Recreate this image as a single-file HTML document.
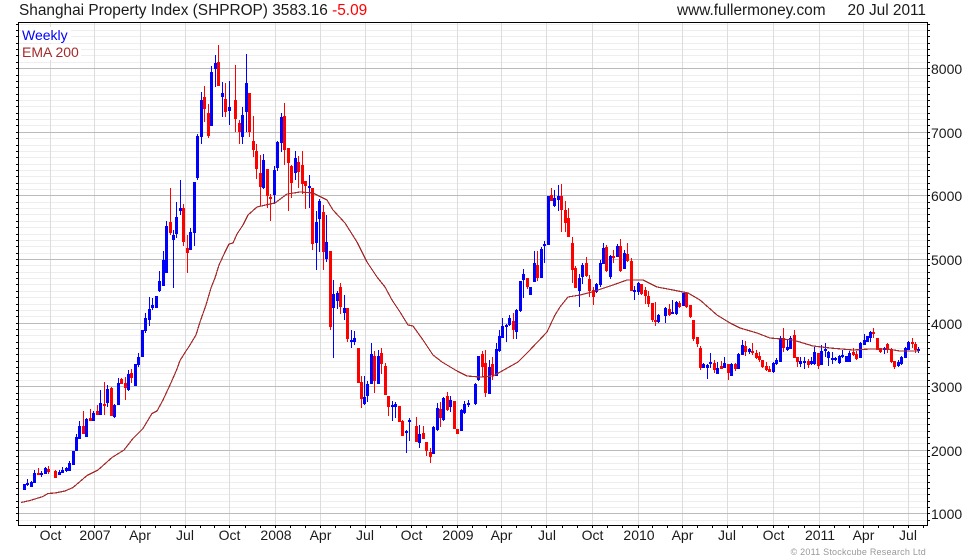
<!DOCTYPE html>
<html><head><meta charset="utf-8"><title>Shanghai Property Index</title>
<style>html,body{margin:0;padding:0;background:#fff;width:980px;height:560px;overflow:hidden}svg{display:block}
text{font-family:"Liberation Sans",Arial,sans-serif;font-size:14px;fill:#1a1a1a}
text.t{font-size:15.4px}
path,polyline{fill:none;shape-rendering:crispEdges}</style></head><body>
<svg width="980" height="560" viewBox="0 0 980 560" xmlns="http://www.w3.org/2000/svg">
<rect width="980" height="560" fill="#fff"/>
<path stroke="#eee" d="M19 24.5H927M19 30.5H927M19 36.5H927M19 43.5H927M19 49.5H927M19 55.5H927M19 62.5H927M19 75.5H927M19 81.5H927M19 87.5H927M19 94.5H927M19 100.5H927M19 106.5H927M19 113.5H927M19 119.5H927M19 125.5H927M19 138.5H927M19 145.5H927M19 151.5H927M19 157.5H927M19 164.5H927M19 170.5H927M19 176.5H927M19 183.5H927M19 189.5H927M19 202.5H927M19 208.5H927M19 214.5H927M19 221.5H927M19 227.5H927M19 234.5H927M19 240.5H927M19 246.5H927M19 253.5H927M19 265.5H927M19 272.5H927M19 278.5H927M19 284.5H927M19 291.5H927M19 297.5H927M19 304.5H927M19 310.5H927M19 316.5H927M19 329.5H927M19 335.5H927M19 342.5H927M19 348.5H927M19 354.5H927M19 361.5H927M19 367.5H927M19 373.5H927M19 380.5H927M19 393.5H927M19 399.5H927M19 405.5H927M19 412.5H927M19 418.5H927M19 424.5H927M19 431.5H927M19 437.5H927M19 443.5H927M19 456.5H927M19 463.5H927M19 469.5H927M19 475.5H927M19 482.5H927M19 488.5H927M19 494.5H927M19 501.5H927M19 507.5H927M19 520.5H927"/>
<path stroke="#ddd" d="M50.5 23V525M94.5 23V525M140.5 23V525M185.5 23V525M229.5 23V525M275.5 23V525M320.5 23V525M365.5 23V525M411.5 23V525M457.5 23V525M501.5 23V525M546.5 23V525M592.5 23V525M638.5 23V525M682.5 23V525M727.5 23V525M773.5 23V525M819.5 23V525M863.5 23V525M908.5 23V525"/>
<path stroke="#bbb" d="M19 68.5H927M19 132.5H927M19 195.5H927M19 259.5H927M19 323.5H927M19 386.5H927M19 450.5H927M19 513.5H927"/>
<rect x="21" y="27" width="50" height="16" fill="#fff"/><rect x="21" y="44" width="60" height="16" fill="#fff"/>
<!-- blue wicks -->
<path stroke="#0000ff" d="M27.5 479V486M31.5 481V487M34.5 470V483M41.5 471V477M45.5 467V474M59.5 470V475M62.5 467V473M66.5 467V472M69.5 461V471M76.5 434V451M79.5 421V439M86.5 418V437M93.5 411V421M100.5 390V415M107.5 385V407M114.5 404V418M118.5 378V405M128.5 370V391M138.5 353V367M145.5 313V333M149.5 297V326M152.5 298V310M159.5 271V292M163.5 251V286M166.5 221V273M173.5 230V288M176.5 202V238M180.5 180V215M190.5 228V250M194.5 182V246M197.5 134V180M201.5 92V144M211.5 66V126M215.5 55V87M222.5 82V117M229.5 81V125M242.5 107V144M246.5 54V132M263.5 154V189M274.5 166V204M277.5 141V171M281.5 113V152M295.5 151V180M309.5 175V208M316.5 211V270M319.5 199V252M326.5 215V262M333.5 280V358M337.5 291V309M344.5 295V320M351.5 330V348M354.5 331V345M364.5 376V405M367.5 381V402M371.5 343V384M378.5 350V384M392.5 401V421M395.5 402V418M406.5 430V453M409.5 418V441M419.5 425V448M433.5 426V454M437.5 403V431M443.5 397V421M450.5 396V412M461.5 409V431M464.5 401V414M468.5 400V407M475.5 383V405M478.5 356V381M489.5 360V394M496.5 343V376M499.5 330V352M502.5 318V338M506.5 324V342M509.5 315V326M516.5 309V339M520.5 281V312M523.5 269V298M534.5 251V282M541.5 247V278M544.5 241V263M554.5 190V207M558.5 185V211M579.5 274V307M582.5 263V284M596.5 283V293M600.5 260V287M603.5 243V264M610.5 255V279M617.5 244V257M624.5 250V269M634.5 286V300M638.5 282V295M658.5 314V323M665.5 307V323M672.5 300V314M676.5 301V315M703.5 363V368M707.5 364V379M710.5 353V368M717.5 362V374M724.5 357V368M731.5 363V376M738.5 353V369M742.5 340V355M749.5 348V354M773.5 362V373M776.5 358V365M780.5 336V362M787.5 339V351M790.5 336V349M800.5 357V367M804.5 357V369M811.5 357V365M814.5 347V365M821.5 345V365M825.5 343V357M828.5 351V366M832.5 352V364M835.5 357V361M839.5 355V364M842.5 350V358M849.5 351V362M860.5 342V358M864.5 334V345M870.5 331V342M884.5 347V354M898.5 360V367M901.5 356V365M905.5 347V358M908.5 341V350M918.5 347V353"/>
<!-- blue bodies -->
<path stroke="#0000ff" stroke-width="3" d="M24.5 484V490M27.5 483V485M31.5 482V487M34.5 473V483M41.5 473V475M45.5 468V474M59.5 472V475M62.5 470V473M66.5 468V471M69.5 463V471M73.5 451V465M76.5 437V451M79.5 426V439M86.5 419V437M93.5 413V421M100.5 403V415M107.5 389V403M114.5 405V417M118.5 383V405M128.5 374V390M135.5 364V386M138.5 357V365M142.5 330V357M145.5 318V331M149.5 309V320M152.5 305V308M156.5 296V308M159.5 281V291M163.5 260V286M166.5 226V273M173.5 235V240M176.5 217V234M180.5 208V211M190.5 232V250M194.5 182V233M197.5 136V178M201.5 100V137M211.5 72V126M215.5 63V69M222.5 93V97M229.5 107V111M242.5 115V137M246.5 83V112M263.5 160V188M274.5 170V195M277.5 142V168M281.5 117V143M295.5 158V173M309.5 186V188M316.5 222V243M319.5 201V219M326.5 242V259M333.5 294V308M337.5 293V301M344.5 308V313M351.5 340V342M354.5 338V342M364.5 397V404M367.5 384V396M371.5 354V384M378.5 356V384M392.5 405V407M395.5 404V407M406.5 431V433M409.5 420V422M419.5 434V443M433.5 427V454M437.5 408V430M443.5 398V420M450.5 400V407M461.5 410V431M464.5 404V413M468.5 403V405M475.5 384V404M478.5 356V380M489.5 367V394M496.5 349V376M499.5 336V351M502.5 326V338M506.5 325V327M509.5 318V325M516.5 310V332M520.5 281V311M523.5 274V280M530.5 287V295M534.5 263V282M541.5 249V278M544.5 244V246M548.5 196V245M554.5 198V206M558.5 196V200M579.5 278V291M582.5 265V277M596.5 284V292M600.5 263V285M603.5 248V264M610.5 256V277M617.5 246V257M624.5 253V269M634.5 290V292M638.5 283V292M658.5 315V322M665.5 308V316M672.5 312V314M676.5 302V314M683.5 293V306M703.5 364V368M707.5 365V368M710.5 362V364M717.5 368V374M724.5 363V368M731.5 364V376M738.5 354V369M742.5 345V355M749.5 349V352M773.5 363V372M776.5 360V364M780.5 338V362M787.5 347V350M790.5 338V349M800.5 361V364M804.5 361V363M811.5 361V364M814.5 352V364M821.5 351V365M825.5 349V351M828.5 352V358M832.5 358V360M835.5 358V360M839.5 356V363M842.5 355V357M846.5 356V362M849.5 353V362M860.5 343V358M864.5 340V345M867.5 336V342M870.5 332V338M884.5 348V350M898.5 362V366M901.5 357V364M905.5 348V358M908.5 342V350M918.5 349V351"/>
<!-- red wicks -->
<path stroke="#ff0000" d="M38.5 468V475M48.5 466V474M55.5 470V478M83.5 411V434M90.5 409V421M97.5 405V415M104.5 382V415M111.5 387V416M121.5 378V384M125.5 377V400M131.5 369V383M170.5 188V235M183.5 204V246M187.5 235V273M204.5 86V122M208.5 104V138M218.5 45V86M225.5 83V117M235.5 65V132M239.5 120V144M249.5 93V137M253.5 116V157M256.5 144V179M260.5 155V206M267.5 169V208M270.5 194V221M284.5 103V165M288.5 148V211M291.5 165V198M298.5 156V188M302.5 151V194M305.5 181V209M312.5 188V250M323.5 205V270M330.5 251V330M340.5 283V314M347.5 308V342M361.5 376V408M374.5 351V393M381.5 348V374M385.5 363V395M388.5 396V416M402.5 420V436M416.5 417V442M423.5 426V439M426.5 442V456M430.5 448V463M440.5 402V427M447.5 392V411M482.5 351V377M485.5 350V397M492.5 357V380M513.5 313V339M527.5 278V289M537.5 251V281M551.5 188V201M561.5 184V232M565.5 201V232M568.5 208V237M572.5 237V283M575.5 266V288M586.5 257V277M589.5 275V297M593.5 287V305M606.5 245V272M613.5 250V263M620.5 239V272M627.5 243V262M631.5 258V291M641.5 284V295M645.5 287V304M648.5 291V307M652.5 303V322M655.5 302V326M669.5 304V316M679.5 301V308M686.5 292V308M690.5 305V318M693.5 320V341M697.5 337V347M700.5 346V370M714.5 360V373M721.5 361V369M728.5 364V380M735.5 363V371M745.5 341V356M752.5 343V355M756.5 350V359M759.5 352V362M762.5 360V368M766.5 362V371M769.5 366V372M783.5 328V352M794.5 330V358M797.5 357V367M808.5 359V368M818.5 353V369M853.5 348V356M856.5 351V360M873.5 328V338M880.5 348V353M887.5 343V353M891.5 348V363M894.5 361V369M912.5 338V348M915.5 342V353"/>
<!-- red bodies -->
<path stroke="#ff0000" stroke-width="3" d="M38.5 473V475M48.5 469V472M55.5 471V478M83.5 426V434M90.5 418V421M97.5 411V415M104.5 404V406M111.5 388V416M121.5 379V384M125.5 383V388M131.5 373V378M170.5 222V233M183.5 208V242M187.5 248V253M204.5 97V109M208.5 113V136M218.5 62V86M225.5 99V112M235.5 100V119M239.5 123V132M249.5 93V132M253.5 141V150M256.5 151V169M260.5 173V187M267.5 169V196M270.5 197V199M284.5 116V150M288.5 148V163M291.5 166V183M298.5 162V172M302.5 165V184M305.5 181V186M312.5 188V244M323.5 212V252M330.5 251V327M340.5 287V307M347.5 308V339M358.5 348V383M361.5 382V399M374.5 356V381M381.5 353V364M385.5 366V395M388.5 396V407M399.5 406V422M402.5 421V436M416.5 426V442M423.5 433V439M426.5 442V451M430.5 452V457M440.5 409V418M447.5 396V410M454.5 401V429M457.5 429V434M482.5 354V367M485.5 363V393M492.5 364V375M513.5 321V330M527.5 278V287M537.5 265V278M551.5 195V201M561.5 196V210M565.5 210V223M568.5 218V237M572.5 243V270M575.5 268V288M586.5 263V276M589.5 279V291M593.5 290V297M606.5 247V271M613.5 256V258M620.5 246V271M627.5 254V261M631.5 261V291M641.5 284V294M645.5 290V296M648.5 296V304M652.5 303V320M655.5 320V322M669.5 309V315M679.5 303V307M686.5 293V307M690.5 305V317M693.5 320V339M697.5 337V344M700.5 348V368M714.5 363V370M721.5 366V369M728.5 364V373M735.5 364V369M745.5 346V352M752.5 351V353M756.5 353V358M759.5 356V360M762.5 360V367M766.5 366V370M769.5 369V372M783.5 338V348M794.5 335V358M797.5 357V362M808.5 361V365M818.5 353V366M853.5 352V355M856.5 354V359M873.5 332V334M877.5 338V350M880.5 348V352M887.5 344V350M891.5 349V362M894.5 361V367M912.5 342V344M915.5 344V350"/>
<!-- EMA -->
<polyline stroke="#a52a2a" stroke-width="1.2" points="21,502.5 30,500.5 43,496.5 48,493.5 55,493 65,491 73,487.5 87,475.5 98,470 112,457.5 124,450 133,438.5 143,428.5 152,413.5 157,411 163,400 170,385 177,369 180,360.5 186,351 190,345 196,335 200,322 206,305 211,288 215,278 219,265 225,252 229,244 233,243 237,234 243,225 248,215 257,207 270,204 275,203 287,194 300,192 313,193 327,200 333,210 345,223 357,242 367,262 377,277 385,287 392,300 400,312 408,325 413,326 423,340 433,355 442,362 457,371 467,376 480,377 493,376 502,371 518,362 528,352 547,332 555,315 560,307 568,297 580,295 592,292 613,285 627,280 643,280 657,287 673,290 688,293 700,300 717,315 730,323 740,328 757,333 770,338 793,340 813,346 830,348 853,350 870,349 887,349 900,351 919,351"/>
<!-- frame -->
<path stroke="#000" d="M18.5 22.5H927.5V525.5H18.5Z"/>
<path stroke="#000" d="M16 24.5h2M16 30.5h2M16 36.5h2M16 43.5h2M16 49.5h2M16 55.5h2M16 62.5h2M16 68.5h2M16 75.5h2M16 81.5h2M16 87.5h2M16 94.5h2M16 100.5h2M16 106.5h2M16 113.5h2M16 119.5h2M16 125.5h2M16 132.5h2M16 138.5h2M16 145.5h2M16 151.5h2M16 157.5h2M16 164.5h2M16 170.5h2M16 176.5h2M16 183.5h2M16 189.5h2M16 195.5h2M16 202.5h2M16 208.5h2M16 214.5h2M16 221.5h2M16 227.5h2M16 234.5h2M16 240.5h2M16 246.5h2M16 253.5h2M16 259.5h2M16 265.5h2M16 272.5h2M16 278.5h2M16 284.5h2M16 291.5h2M16 297.5h2M16 304.5h2M16 310.5h2M16 316.5h2M16 323.5h2M16 329.5h2M16 335.5h2M16 342.5h2M16 348.5h2M16 354.5h2M16 361.5h2M16 367.5h2M16 373.5h2M16 380.5h2M16 386.5h2M16 393.5h2M16 399.5h2M16 405.5h2M16 412.5h2M16 418.5h2M16 424.5h2M16 431.5h2M16 437.5h2M16 443.5h2M16 450.5h2M16 456.5h2M16 463.5h2M16 469.5h2M16 475.5h2M16 482.5h2M16 488.5h2M16 494.5h2M16 501.5h2M16 507.5h2M16 513.5h2M16 520.5h2"/>
<path stroke="#000" d="M928 24.5h2M928 30.5h2M928 36.5h2M928 43.5h2M928 49.5h2M928 55.5h2M928 62.5h2M928 68.5h2M928 75.5h2M928 81.5h2M928 87.5h2M928 94.5h2M928 100.5h2M928 106.5h2M928 113.5h2M928 119.5h2M928 125.5h2M928 132.5h2M928 138.5h2M928 145.5h2M928 151.5h2M928 157.5h2M928 164.5h2M928 170.5h2M928 176.5h2M928 183.5h2M928 189.5h2M928 195.5h2M928 202.5h2M928 208.5h2M928 214.5h2M928 221.5h2M928 227.5h2M928 234.5h2M928 240.5h2M928 246.5h2M928 253.5h2M928 259.5h2M928 265.5h2M928 272.5h2M928 278.5h2M928 284.5h2M928 291.5h2M928 297.5h2M928 304.5h2M928 310.5h2M928 316.5h2M928 323.5h2M928 329.5h2M928 335.5h2M928 342.5h2M928 348.5h2M928 354.5h2M928 361.5h2M928 367.5h2M928 373.5h2M928 380.5h2M928 386.5h2M928 393.5h2M928 399.5h2M928 405.5h2M928 412.5h2M928 418.5h2M928 424.5h2M928 431.5h2M928 437.5h2M928 443.5h2M928 450.5h2M928 456.5h2M928 463.5h2M928 469.5h2M928 475.5h2M928 482.5h2M928 488.5h2M928 494.5h2M928 501.5h2M928 507.5h2M928 513.5h2M928 520.5h2"/>
<path stroke="#000" d="M35.5 526v2M50.5 526v2M65.5 526v2M80.5 526v2M94.5 526v2M110.5 526v2M125.5 526v2M140.5 526v2M155.5 526v2M170.5 526v2M185.5 526v2M200.5 526v2M214.5 526v2M229.5 526v2M245.5 526v2M260.5 526v2M275.5 526v2M290.5 526v2M305.5 526v2M320.5 526v2M335.5 526v2M350.5 526v2M365.5 526v2M380.5 526v2M396.5 526v2M411.5 526v2M426.5 526v2M442.5 526v2M457.5 526v2M472.5 526v2M486.5 526v2M501.5 526v2M516.5 526v2M531.5 526v2M546.5 526v2M562.5 526v2M577.5 526v2M592.5 526v2M607.5 526v2M622.5 526v2M638.5 526v2M652.5 526v2M667.5 526v2M682.5 526v2M697.5 526v2M712.5 526v2M727.5 526v2M742.5 526v2M757.5 526v2M773.5 526v2M788.5 526v2M804.5 526v2M819.5 526v2M834.5 526v2M849.5 526v2M863.5 526v2M878.5 526v2M893.5 526v2M908.5 526v2M923.5 526v2"/>
<!-- text -->
<text class="t" x="19" y="15">Shanghai Property Index (SHPROP) 3583.16 <tspan fill="#ff0000">-5.09</tspan></text>
<text class="t" x="677" y="15">www.fullermoney.com</text>
<text class="t" x="926" y="15" text-anchor="end">20 Jul 2011</text>
<text x="22" y="40" style="fill:#0000ff">Weekly</text>
<text x="22" y="57" style="fill:#a52a2a">EMA 200</text>
<g text-anchor="start"><text x="931" y="74">8000</text><text x="931" y="138">7000</text><text x="931" y="201">6000</text><text x="931" y="265">5000</text><text x="931" y="329">4000</text><text x="931" y="392">3000</text><text x="931" y="456">2000</text><text x="931" y="519">1000</text></g>
<g text-anchor="middle"><text x="50.5" y="540">Oct</text><text x="95" y="540">2007</text><text x="140" y="540">Apr</text><text x="185" y="540">Jul</text><text x="229.5" y="540">Oct</text><text x="276" y="540">2008</text><text x="320.5" y="540">Apr</text><text x="365" y="540">Jul</text><text x="411.5" y="540">Oct</text><text x="458" y="540">2009</text><text x="501.5" y="540">Apr</text><text x="547" y="540">Jul</text><text x="592.5" y="540">Oct</text><text x="639" y="540">2010</text><text x="682.5" y="540">Apr</text><text x="727" y="540">Jul</text><text x="773.5" y="540">Oct</text><text x="820" y="540">2011</text><text x="863.5" y="540">Apr</text><text x="908" y="540">Jul</text></g>
<text x="926" y="555" text-anchor="end" style="font-size:9px;fill:#999;letter-spacing:.22px">© 2011 Stockcube Research Ltd</text>
</svg>
</body></html>
